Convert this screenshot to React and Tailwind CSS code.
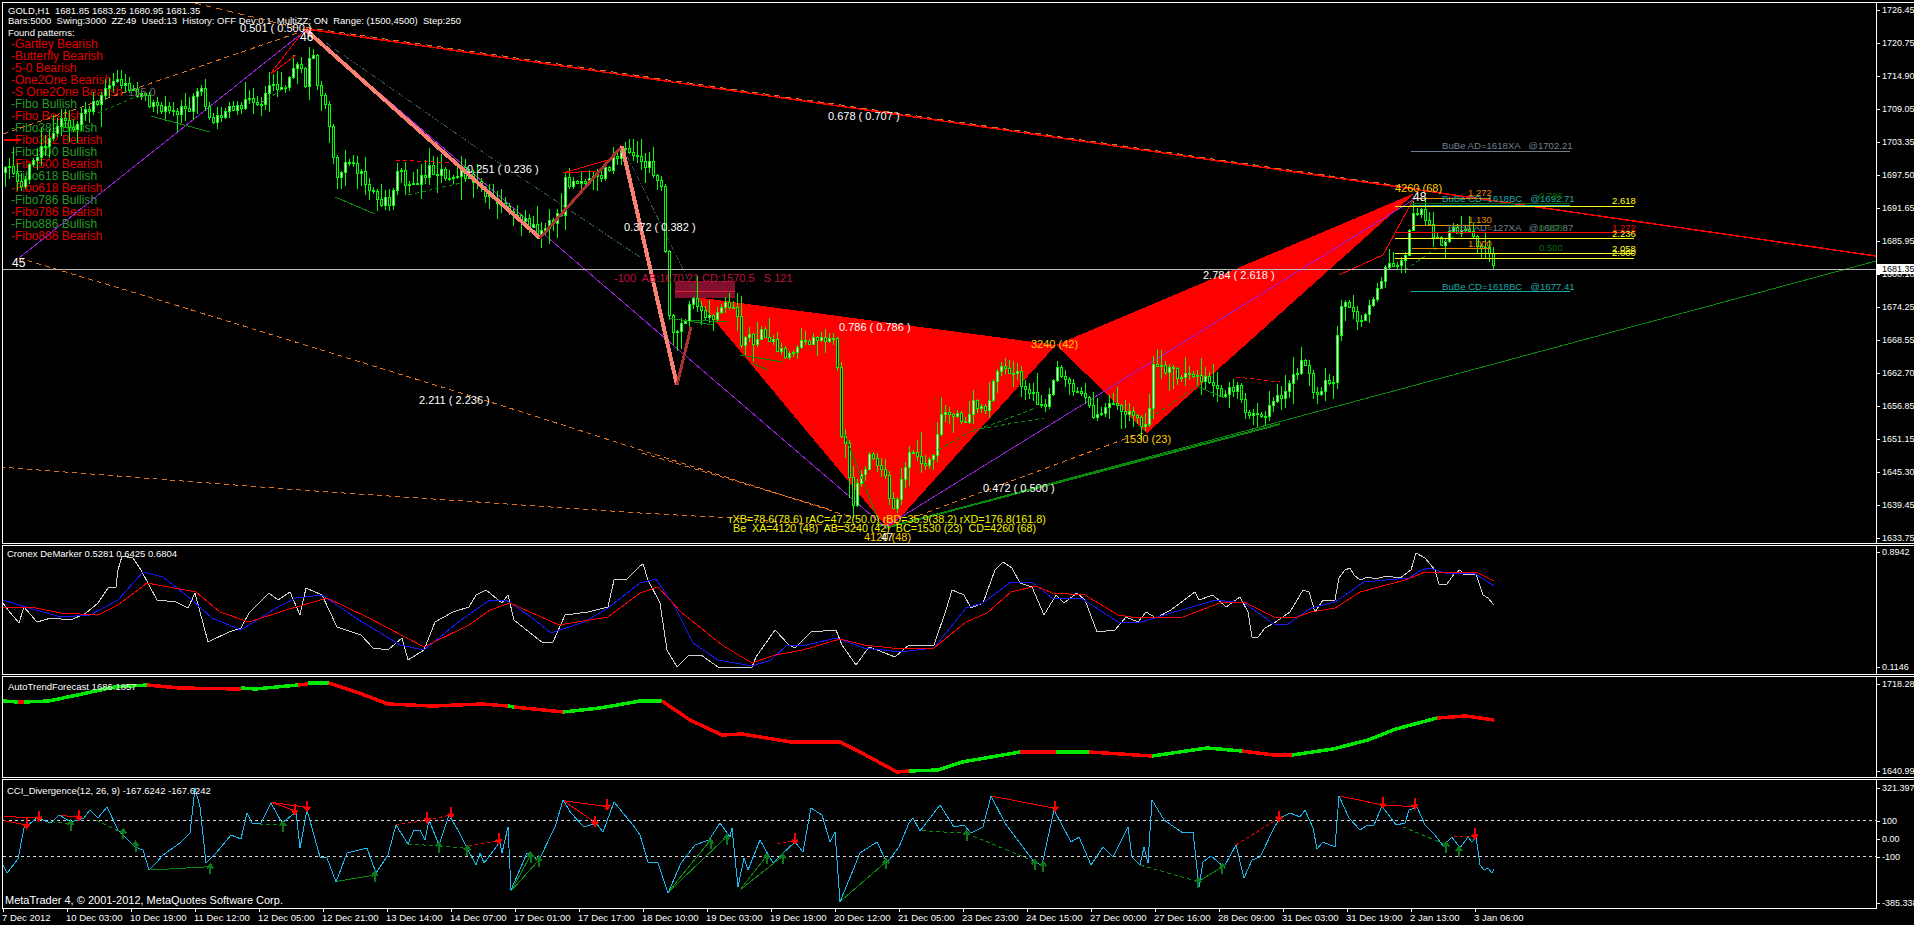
import React from "react";

const keys = [[5,172],[9,170],[15,182],[25,180],[32,155],[45,148],[60,122],[75,125],[87,110],[100,98],[112,78],[117,80],[128,90],[143,93],[147,103],[157,108],[180,109],[192,105],[197,87],[203,95],[207,115],[212,123],[227,108],[247,102],[263,103],[271,83],[286,87],[292,68],[300,67],[306,90],[310,40],[316,78],[326,105],[331,143],[337,180],[347,160],[361,173],[375,200],[392,200],[396,163],[408,190],[429,170],[449,173],[461,170],[482,190],[510,210],[539,230],[563,213],[565,182],[588,182],[608,167],[622,147],[643,160],[655,172],[663,195],[667,313],[675,333],[683,327],[691,300],[699,307],[711,317],[722,300],[736,310],[742,347],[748,333],[756,347],[762,328],[769,343],[779,347],[785,353],[797,347],[811,337],[824,337],[836,345],[840,433],[846,450],[852,510],[858,483],[869,457],[885,480],[891,507],[899,490],[911,447],[922,470],[934,450],[942,407],[952,413],[966,420],[971,403],[987,407],[995,367],[1015,373],[1026,390],[1038,400],[1044,413],[1050,390],[1056,360],[1064,383],[1073,390],[1089,400],[1093,413],[1109,407],[1130,413],[1148,427],[1152,367],[1171,367],[1181,377],[1199,373],[1215,390],[1228,393],[1238,383],[1244,410],[1260,420],[1279,397],[1286,387],[1294,373],[1303,357],[1315,393],[1327,383],[1335,377],[1339,300],[1352,310],[1360,327],[1372,297],[1382,273],[1392,263],[1407,260],[1409,233],[1415,207],[1421,213],[1431,230],[1439,243],[1453,230],[1470,233],[1480,247],[1488,250],[1492,263],[1495,269]];

function buildCandles() {
  let seed = 12345;
  const rnd = () => { seed = (seed * 1664525 + 1013904223) % 4294967296; return seed / 4294967296; };
  const at = (x) => {
    for (let i = 1; i < keys.length; i++) {
      if (x <= keys[i][0]) {
        const [a, b] = keys[i - 1], [c, d] = keys[i];
        return b + ((d - b) * (x - a)) / (c - a);
      }
    }
    return keys[keys.length - 1][1];
  };
  const out = [];
  let prev = at(5);
  for (let x = 5; x <= 1495; x += 4) {
    const close = at(x) + (x > 1490 ? 0 : (rnd() - 0.5) * 11);
    const top = Math.min(prev, close), bot = Math.max(prev, close);
    out.push({ x, o: prev, c: close, hi: top - 1 - rnd() * rnd() * 24, lo: bot + 1 + rnd() * rnd() * 24 });
    prev = close;
  }
  return out;
}
const candles = buildCandles();

const gray = "3,603 8,610 19,623 24,607 37,622 51,618 71,620 86,613 98,603 108,588 116,587 118,570 122,556 133,558 141,570 157,600 176,602 188,608 195,593 208,642 229,632 241,628 249,613 269,593 278,600 290,592 300,615 306,588 322,595 337,627 361,635 373,648 388,650 402,638 408,660 424,650 435,622 453,612 469,607 476,595 486,590 502,603 508,595 514,620 529,632 543,643 553,642 565,615 588,612 608,607 614,580 627,579 640,566 643,564 648,580 660,603 667,650 677,667 689,655 701,655 718,667 738,667 752,667 756,657 775,630 789,645 795,648 811,632 836,630 842,645 856,665 869,647 885,653 895,657 909,645 934,645 946,610 952,590 964,595 971,608 983,603 995,570 1003,562 1012,568 1020,583 1032,587 1044,615 1056,595 1064,603 1077,593 1085,600 1097,632 1115,630 1126,617 1138,622 1146,612 1156,618 1171,610 1195,592 1199,600 1213,595 1226,607 1240,597 1248,612 1252,637 1258,637 1265,628 1274,623 1290,612 1303,590 1309,592 1315,612 1323,600 1335,600 1339,578 1345,570 1350,568 1354,575 1360,580 1368,577 1376,579 1386,576 1400,578 1411,570 1416,553 1425,558 1435,570 1439,584 1447,584 1454,574 1460,570 1464,575 1476,574 1483,595 1488,598 1494,605";
const blue = "3,600 29,608 61,617 90,615 118,600 143,572 163,577 192,600 212,618 241,630 278,607 296,598 322,595 359,620 400,645 424,650 461,620 490,600 506,600 531,617 551,633 584,622 608,608 640,583 656,579 675,607 693,643 718,660 752,666 771,660 787,645 807,645 836,638 864,648 901,652 934,648 966,608 983,603 1011,582 1032,582 1052,598 1081,598 1118,622 1138,623 1171,613 1216,600 1244,603 1274,624 1288,624 1311,608 1335,602 1364,582 1409,578 1421,570 1430,568 1445,573 1474,573 1494,586";
const red = "3,607 31,607 61,613 98,615 118,605 147,583 196,592 220,612 249,622 286,610 327,598 367,617 424,647 469,625 490,610 510,603 559,625 608,617 640,593 658,587 681,612 722,645 752,663 775,655 803,650 840,639 864,645 901,649 934,648 966,622 987,613 1011,592 1036,586 1052,593 1085,595 1118,615 1138,618 1183,617 1220,603 1244,602 1274,617 1294,618 1311,612 1335,608 1360,592 1405,580 1425,572 1478,573 1494,581";

const G = "#00e800", R = "#ff0000";
const trend = [
  [G, "3,701 18,702"],[R, "18,702 24,702"],[G, "24,702 49,701 82,694 114,687 147,685"],
  [R, "147,685 180,688 241,689"],[G, "241,688 255,689 298,685"],[R, "298,685 308,684"],[G, "308,683 329,683"],
  [R, "329,683 359,693 388,704 433,706 482,704 508,706"],[G, "508,706 514,707"],[R, "514,707 563,712"],
  [G, "563,712 600,708 640,701 662,701"],[R, "662,701 690,720 722,735 742,734 791,742 840,742 860,752 897,772 909,771"],
  [G, "909,771 938,770 962,762 1020,752"],[R, "1020,752 1056,752"],[G, "1056,752 1089,752"],[R, "1089,752 1152,756"],
  [G, "1152,756 1207,748 1242,751"],[R, "1242,751 1274,755 1292,755"],[G, "1292,755 1333,749 1368,740 1396,729 1437,718"],
  [R, "1437,718 1466,716 1494,720"],
];

const cci = "3,865 7,873 18,859 24,828 37,818 51,823 59,815 71,822 84,818 90,810 98,818 107,807 118,830 135,847 143,850 149,870 157,862 163,855 180,843 190,833 195,788 200,807 206,863 216,853 231,835 241,839 247,813 252,823 261,823 271,803 282,823 296,812 300,848 307,810 320,857 327,858 336,882 347,853 367,848 376,873 388,855 396,825 408,844 414,830 420,830 425,840 429,820 439,845 449,815 459,832 467,848 476,865 480,853 484,863 500,842 502,853 508,827 511,890 527,853 539,860 555,827 563,800 571,813 584,827 596,823 603,832 614,802 633,825 640,835 648,862 658,863 668,893 681,863 695,845 709,840 720,823 730,837 732,828 738,887 744,858 748,870 760,840 773,863 781,855 795,842 803,852 811,808 822,815 830,842 835,832 840,902 860,853 877,842 887,863 899,847 909,823 913,818 920,831 940,805 954,827 964,825 971,833 983,827 991,796 1005,823 1034,862 1042,865 1054,810 1071,842 1079,837 1091,865 1103,847 1113,857 1128,827 1132,857 1140,865 1144,847 1148,863 1152,800 1164,820 1183,833 1193,832 1199,887 1203,862 1211,856 1224,867 1236,845 1244,878 1252,860 1260,857 1274,828 1280,818 1290,813 1300,817 1305,810 1313,828 1317,849 1323,842 1335,847 1339,796 1349,818 1360,830 1366,826 1374,825 1382,806 1396,825 1405,823 1409,810 1417,807 1425,825 1435,835 1443,846 1452,837 1460,848 1468,837 1472,842 1476,837 1480,865 1484,870 1488,868 1492,873 1494,869";

const pt = (off, x, y) => [x / 2.45 + off, y / 3 + 570];
const redArrows = [[0,65,762],[0,95,740],[0,193,738],[0,722,720],[0,752,710],[0,1047,745],[0,1105,730],[0,1222,808],[0,1458,755],[0,1487,705],[640,380,808],[640,1017,710],[640,1565,740],[1274,12,740],[1274,267,700],[1274,345,703],[1274,492,793]].map(([o,x,y]) => pt(o,x,y));
const greenArrows = [[0,173,765],[0,302,790],[0,332,828],[0,515,895],[0,693,768],[0,918,918],[0,1075,830],[0,1145,840],[0,1300,860],[0,1320,872],[640,173,820],[640,212,808],[640,310,865],[640,350,865],[640,603,880],[640,800,795],[640,967,882],[640,988,888],[640,1368,937],[640,1427,895],[1274,422,830],[1274,453,843]].map(([o,x,y]) => pt(o,x,y));

const seg = (o, a, b, c, d) => { const p = pt(o,a,b), q = pt(o,c,d); return [p[0],p[1],q[0],q[1]]; };
const redSolid = [seg(0,10,740,95,743),seg(0,10,752,65,765),seg(0,150,737,193,740),seg(0,665,697,722,722),seg(0,665,697,752,712),seg(0,1380,692,1487,710),seg(0,1380,692,1458,757),seg(640,860,678,1017,715),seg(1274,160,678,267,705),seg(1274,267,705,345,710)];
const redDash = [seg(0,970,765,1047,750),seg(0,1047,750,1105,735),seg(0,1150,827,1222,812),seg(640,335,822,380,812),seg(640,1460,825,1565,745),seg(1274,440,800,492,800)];
const greenSolid = [seg(0,370,900,515,890),seg(0,822,935,918,915),seg(0,1253,962,1300,855),seg(0,1253,962,1320,870),seg(640,68,968,173,810),seg(640,68,968,212,800),seg(640,245,960,310,858),seg(640,245,960,350,858),seg(640,490,995,603,875),seg(640,1368,935,1427,890)];
const greenDash = [seg(0,125,755,173,762),seg(0,235,750,302,790),seg(0,635,762,693,765),seg(0,1000,822,1075,828),seg(0,1075,828,1145,835),seg(640,690,782,800,790),seg(640,800,790,967,875),seg(640,1225,885,1368,935),seg(1274,315,770,422,825)];

const patterns = [["Gartley Bearish",0],["Butterfly Bearish",0],["5-0 Bearish",0],["One2One Bearish",0],["S One2One Bearish",0],["Fibo Bullish",1],["Fibo Bearish",0],["Fibo382 Bullish",1],["Fibo382 Bearish",0],["Fibo500 Bullish",1],["Fibo500 Bearish",0],["Fibo618 Bullish",1],["Fibo618 Bearish",0],["Fibo786 Bullish",1],["Fibo786 Bearish",0],["Fibo886 Bullish",1],["Fibo886 Bearish",0]];

const prices = ["1726.45","1720.75","1714.90","1709.05","1703.35","1697.50","1691.65","1685.95","1680.10","1674.25","1668.55","1662.70","1656.85","1651.15","1645.30","1639.45","1633.75"];
const dates = ["7 Dec 2012","10 Dec 03:00","10 Dec 19:00","11 Dec 12:00","12 Dec 05:00","12 Dec 21:00","13 Dec 14:00","14 Dec 07:00","17 Dec 01:00","17 Dec 17:00","18 Dec 10:00","19 Dec 03:00","19 Dec 19:00","20 Dec 12:00","21 Dec 05:00","23 Dec 23:00","24 Dec 15:00","27 Dec 00:00","27 Dec 16:00","28 Dec 09:00","31 Dec 03:00","31 Dec 19:00","2 Jan 13:00","3 Jan 06:00"];

function L({ p, c, w = 1, d, o }) {
  return <polyline points={p} fill="none" stroke={c} strokeWidth={w} strokeDasharray={d} opacity={o} />;
}
function T({ x, y, c = "#ffffff", s = 11, children }) {
  return <text x={x} y={y} fill={c} fontSize={s} dominantBaseline="central" xmlSpace="preserve" shapeRendering="auto">{children}</text>;
}

const GOLD = "#ffcc00", YEL = "#f2f200", ORG = "#e88a00", SLATE = "#708090", TEAL = "#20a8a8", DK = "#0a6a0a", CRIM = "#c4103c";

function MainChart() {
  return (
    <svg viewBox="3 3 1873 540" className="absolute inset-0 w-full h-full" shapeRendering="crispEdges">
      <L p="3,134 306,30" c="#e0701a" d="5 4" />
      <L p="195,3 306,30" c="#e0701a" d="6 5" />
      <L p="19,258 159,300 500,405 854,518" c="#e0701a" d="5 4" />
      <L p="0,467 300,490 640,513 732,518 860,528" c="#e0701a" d="5 4" />
      <L p="642,453 832,510" c="#e0701a" d="5 4" />
      <L p="885,528 1130,437 1147,432" c="#e0701a" d="5 4" />
      <polygon points="695,297 1056,345 889,530" fill="#ff0000" />
      <polygon points="1056,345 1415,193 1147,433" fill="#ff0000" />
      <rect x="675" y="281" width="60" height="17" fill="#82102c" />
      <L p="675,291 735,291" c="#e0203c" />
      <L p="326,43 490,157 640,257" c="#2f4f4f" d="6 2 1 2" />
      <L p="622,146 697,297" c="#2f4f4f" d="6 2 1 2" />
      <L p="19,258 306,30 885,527 1418,197" c="#9a20d8" />
      <L p="885,528 1876,261" c="#0a8a0a" />
      <L p="885,528 1280,424" c="#0a8a0a" w="2" />
      <L p="306,29 1876,256" c={R} w="1.5" />
      <L p="306,27.5 1420,189" c="#e0701a" d="6 5" />
      {candles.map((k) => {
        const bull = k.c < k.o;
        const t = Math.round(Math.min(k.o, k.c));
        const b = Math.max(t + 1, Math.round(Math.max(k.o, k.c)));
        return (
          <g key={k.x}>
            <line x1={k.x + 0.5} x2={k.x + 0.5} y1={Math.round(k.hi)} y2={Math.round(k.lo)} stroke="#00ff00" />
            <rect x={k.x - 0.5} y={t + 0.5} width="2" height={b - t} fill={bull ? "#ffffff" : "#000000"} stroke="#00ff00" />
          </g>
        );
      })}
      <L p="306,30 540,238" c="#fa8072" w="4" />
      <L p="540,238 622,146" c="#a83232" w="3" />
      <L p="622,146 677,385" c="#fa8072" w="4" />
      <L p="677,385 691,327" c="#a83232" w="3" />
      <L p="4,140 20,140" c={R} w="2" />
      <L p="271,73 302,33" c={R} /><L p="271,74 296,55" c={R} />
      <L p="563,173 608,160" c={R} /><L p="563,173 596,171" c={R} />
      <L p="396,160 453,163" c={R} d="4 3" />
      <L p="1236,377 1280,382" c={R} d="4 3" />
      <L p="1339,275 1383,255 1413,200" c={R} />
      <L p="151,116 210,132" c="#0a8a0a" /><L p="335,197 375,214" c="#0a8a0a" />
      <L p="669,318 713,325" c="#0a8a0a" /><L p="691,320 728,322" c="#0a8a0a" />
      <L p="740,355 783,362" c="#0a8a0a" /><L p="752,363 768,370" c="#0a8a0a" />
      <L p="1199,387 1224,398" c="#0a8a0a" /><L p="844,433 881,527" c="#0a8a0a" />
      <L p="98,113 135,97" c="#0a8a0a" d="4 3" /><L p="261,103 286,87" c="#0a8a0a" d="4 3" />
      <L p="408,195 461,183" c="#0a8a0a" d="4 3" />
      <L p="973,430 1044,418" c="#0a8a0a" d="4 3" /><L p="971,432 1036,408" c="#0a8a0a" d="4 3" />
      <L p="1150,418 1199,385" c="#0a8a0a" d="4 3" /><L p="938,450 969,432" c="#0a8a0a" d="4 3" />
      <L p="1405,270 1460,232" c="#0a8a0a" d="4 3" />

      <L p="1411,151 1570,151" c={SLATE} /><L p="1411,205 1570,205" c={TEAL} /><L p="1411,291 1570,291" c={TEAL} />
      <L p="1411,203 1570,203" c={DK} />
      <L p="1412,198 1490,198" c={ORG} /><L p="1412,225 1490,225" c={ORG} /><L p="1412,248 1490,248" c={ORG} />
      <L p="1395,206 1634,206" c="#ffff20" /><L p="1395,238 1634,238" c="#ffff20" /><L p="1395,253 1634,253" c="#ffff20" /><L p="1395,258 1634,258" c="#ffff20" />
      <L p="1395,232 1634,232" c={R} />
      <L p="3,269 1876,269" c="#b8b8b8" />

      <T x="128" y="92" c="#707070">155.0</T>
      <T x="240" y="28">0.501 ( 0.500 )</T><T x="300" y="37" s="12">46</T>
      <T x="12" y="263" s="12">45</T>
      <T x="467" y="169">0.251 ( 0.236 )</T>
      <T x="624" y="227">0.372 ( 0.382 )</T>
      <T x="828" y="116">0.678 ( 0.707 )</T>
      <T x="419" y="400">2.211 ( 2.236 )</T>
      <T x="839" y="327">0.786 ( 0.786 )</T>
      <T x="1203" y="275">2.784 ( 2.618 )</T>
      <T x="983" y="488">0.472 ( 0.500 )</T>
      <T x="614" y="278" c={CRIM}>-100  AB:1670.21 CD:1570.5   S 121</T>
      <T x="1031" y="344" c={GOLD}>3240 (42)</T>
      <T x="1124" y="439" c={GOLD}>1530 (23)</T>
      <T x="729" y="519" c={YEL} s="10.8">rXB=78.6(78.6) rAC=47.2(50.0) rBD=35.9(38.2) rXD=176.8(161.8)</T>
      <T x="733" y="528" c={YEL} s="10.7">Be  XA=4120 (48)  AB=3240 (42)  BC=1530 (23)  CD=4260 (68)</T>
      <T x="864" y="537" c={GOLD}>4120 (48)</T><T x="881" y="537">47</T>
      <T x="1395" y="188" c={GOLD}>4260 (68)</T><T x="1413" y="197" s="12">48</T>

      <T x="1442" y="145" c={SLATE} s="9.6">BuBe AD=1618XA   @1702.21</T>
      <T x="1442" y="198" c={TEAL} s="9.6">BuBe CD=1618BC   @1692.71</T>
      <T x="1448" y="227" c={SLATE} s="9.6">BuBe AD=127XA   @1687.87</T>
      <T x="1442" y="286" c={TEAL} s="9.6">BuBe CD=1618BC   @1677.41</T>
      <T x="1468" y="192" c={ORG} s="9.5">1.272</T><T x="1468" y="219" c={ORG} s="9.5">1.130</T><T x="1468" y="243" c={ORG} s="9.5">1.000</T>
      <T x="1539" y="195" c={DK} s="9.5">0.786</T><T x="1539" y="227" c={DK} s="9.5">0.618</T><T x="1539" y="247" c={DK} s="9.5">0.500</T>
      <T x="1612" y="200" c="#ffff20" s="9.5">2.618</T><T x="1612" y="233" c="#ffff20" s="9.5">2.236</T><T x="1612" y="248" c="#ffff20" s="9.5">2.058</T><T x="1612" y="252" c="#ffff20" s="9.5">2.000</T>
      <T x="1612" y="227" c={R} s="9.5">1.272</T>
    </svg>
  );
}

function CCIChart() {
  return (
    <svg viewBox="3 780 1873 128" className="block w-full h-full" shapeRendering="crispEdges">
      <L p="3,820 1876,820" c="#d8d8d8" d="3 3" />
      <L p="3,856 1876,856" c="#d8d8d8" d="3 3" />
      {greenSolid.map((s, i) => <line key={i} x1={s[0]} y1={s[1]} x2={s[2]} y2={s[3]} stroke="#0a8a0a" />)}
      {greenDash.map((s, i) => <line key={i} x1={s[0]} y1={s[1]} x2={s[2]} y2={s[3]} stroke="#0a8a0a" strokeDasharray="4 3" />)}
      {redSolid.map((s, i) => <line key={i} x1={s[0]} y1={s[1]} x2={s[2]} y2={s[3]} stroke={R} />)}
      {redDash.map((s, i) => <line key={i} x1={s[0]} y1={s[1]} x2={s[2]} y2={s[3]} stroke={R} strokeDasharray="3 3" />)}
      <L p={cci} c="#19b8f0" />
      {redArrows.map(([x, y], i) => (
        <path key={i} d={`M${x} ${y - 6}V${y + 4}M${x - 3} ${y}L${x} ${y + 4}L${x + 3} ${y}`} fill="none" stroke={R} strokeWidth="2" />
      ))}
      {greenArrows.map(([x, y], i) => (
        <path key={i} d={`M${x} ${y + 6}V${y - 4}M${x - 3} ${y}L${x} ${y - 4}L${x + 3} ${y}`} fill="none" stroke="#0a7a1a" strokeWidth="2" />
      ))}
    </svg>
  );
}

function Axis({ children, className = "" }) {
  return <div className={`w-[37px] text-[9px] leading-none overflow-hidden flex flex-col text-white ${className}`}>{children}</div>;
}
function Tick({ children, className = "" }) {
  return (
    <div className={`flex items-center whitespace-nowrap ${className}`}>
      <span className="w-[3px] h-px bg-white shrink-0" />
      <span className="ml-[2px]">{children}</span>
    </div>
  );
}

export default function App() {
  return (
    <div className="relative w-[1914px] h-[925px] bg-black overflow-hidden pl-[2px] pt-[2px] text-white text-[9.5px] leading-none font-['Liberation_Sans',Arial,sans-serif]">
      {/* main */}
      <div className="flex h-[542px] border-t border-b border-l border-white">
        <div className="relative w-[1873px] border-r border-white box-content overflow-hidden">
          <div className="absolute left-[5px] top-[3px] whitespace-pre">
            <div className="h-[10px] flex items-center">GOLD,H1  1681.85 1683.25 1680.95 1681.35</div>
            <div className="h-[10px] flex items-center">Bars:5000  Swing:3000  ZZ:49  Used:13  History: OFF Dev:0.1  MultiZZ: ON  Range: (1500,4500)  Step:250</div>
            <div className="h-[12px] mt-px flex items-center">Found patterns:</div>
            <ul className="ml-[3px] -mt-px text-[12px] leading-[12px]">
              {patterns.map(([t, g]) => (
                <li key={t} className={g ? "text-[#269c26]" : "text-[#e00000]"}>-{t}</li>
              ))}
            </ul>
          </div>
          <MainChart />
        </div>
        <Axis>
          <div className="-mt-[9px]">
            {prices.map((p) => <Tick key={p} className="h-[33px]">{p}</Tick>)}
          </div>
          <div className="absolute right-0 top-[264px] w-[37px] h-[10px] bg-white text-black flex items-center pl-[5px]">1681.35</div>
        </Axis>
      </div>

      {/* cronex */}
      <div className="flex h-[130px] mt-px border-t border-b border-l border-white">
        <div className="relative w-[1873px] border-r border-white box-content overflow-hidden">
          <div className="absolute left-[4px] top-[3px]">Cronex DeMarker 0.5281 0.6425 0.6804</div>
          <svg viewBox="3 546 1873 128" className="block w-full h-full" shapeRendering="crispEdges">
            <L p={gray} c="#d0d0d0" /><L p={blue} c="#1818ff" /><L p={red} c={R} />
          </svg>
        </div>
        <Axis className="justify-between pt-[2px] pb-[2px]">
          <Tick>0.8942</Tick>
          <Tick>0.1146</Tick>
        </Axis>
      </div>

      {/* auto trend */}
      <div className="flex h-[102px] mt-px border-t border-b border-l border-white">
        <div className="relative w-[1873px] border-r border-white box-content overflow-hidden">
          <div className="absolute left-[5px] top-[5px]">AutoTrendForecast 1686.1857</div>
          <svg viewBox="3 677 1873 100" className="block w-full h-full" shapeRendering="crispEdges">
            {trend.map(([c, p], i) => <L key={i} p={p} c={c} w="3.5" />)}
          </svg>
        </div>
        <Axis className="justify-between pt-[3px] pb-[1px]">
          <Tick>1718.28</Tick>
          <Tick>1640.99</Tick>
        </Axis>
      </div>

      {/* cci */}
      <div className="flex h-[130px] mt-px">
        <div className="relative w-[1875px] border-t border-b border-l border-r border-white">
          <div className="absolute left-[4px] top-[6px]">CCI_Divergence(12, 26, 9) -167.6242 -167.6242</div>
          <div className="absolute left-[2px] bottom-[2px] text-[11px] whitespace-nowrap">MetaTrader 4, © 2001-2012, MetaQuotes Software Corp.</div>
          <CCIChart />
        </div>
        <Axis className="border-t border-white pt-[3px]">
          <Tick className="h-[10px] shrink-0">321.397</Tick>
          <Tick className="h-[10px] mt-[23px] shrink-0">100</Tick>
          <Tick className="h-[10px] mt-[8px] shrink-0">0.00</Tick>
          <Tick className="h-[10px] mt-[8px] shrink-0">-100</Tick>
          <Tick className="h-[10px] mt-[36px] shrink-0">-385.338</Tick>
        </Axis>
      </div>

      {/* time axis */}
      <div className="flex h-[16px] pl-px">
        {dates.map((d) => (
          <div key={d} className="w-[64px] shrink-0">
            <div className="w-px h-[3px] bg-white" />
            <div className="whitespace-nowrap -ml-px mt-[1px] leading-[10px]">{d}</div>
          </div>
        ))}
      </div>
    </div>
  );
}
